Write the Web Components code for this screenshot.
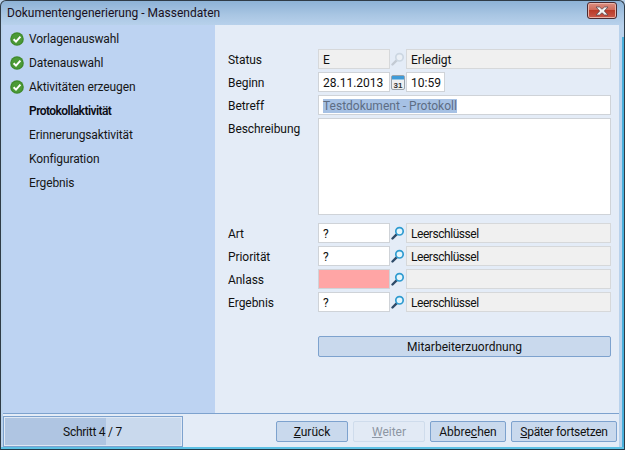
<!DOCTYPE html>
<html><head><meta charset="utf-8"><style>
html,body{margin:0;padding:0;width:625px;height:450px;overflow:hidden;background:#b9d1ea}
body{font:12px Roboto,"Open Sans",sans-serif;color:#111}
</style></head><body>
<wizard-window>
  <span slot="title">Dokumentengenerierung - Massendaten</span>
  <wizard-steps slot="side">
    <wizard-step done>Vorlagenauswahl</wizard-step>
    <wizard-step done>Datenauswahl</wizard-step>
    <wizard-step done>Aktivitäten erzeugen</wizard-step>
    <wizard-step current>Protokollaktivität</wizard-step>
    <wizard-step>Erinnerungsaktivität</wizard-step>
    <wizard-step>Konfiguration</wizard-step>
    <wizard-step>Ergebnis</wizard-step>
  </wizard-steps>
  <activity-form slot="main"></activity-form>
  <wizard-footer slot="footer"></wizard-footer>
</wizard-window>
<script>
function def(name,html){
  customElements.define(name,class extends HTMLElement{
    constructor(){super();const r=this.attachShadow({mode:'open'});r.innerHTML=typeof html==='function'?html(this):html;}
  });
}
def('wizard-window',`<style>
:host{display:flex;flex-direction:column;width:625px;height:450px;box-sizing:border-box;
 background:linear-gradient(#49afdb,#49afdb) right 0 top 36px / 2px 100% no-repeat,linear-gradient(#8db2d6 0,#a9c6e3 14px,#b9d2ec 25px,#b9d2ec 100%);
 border:1px solid #2f3b46;border-bottom:0;border-radius:6px 6px 0 0;overflow:hidden}
.title{height:24px;flex:none;display:flex;align-items:center;justify-content:space-between;padding:0 7px 0 6px;color:#1a0f20}
.body{flex:1;min-height:0;display:flex;flex-direction:column;margin:0 5px 0 2px;background:#e4ecf7}
.top{flex:1;min-height:0;display:flex}
.edge{height:3px;flex:none;box-sizing:border-box;background:#5cc0e4;border-bottom:1px solid #1f3a4a}
.side{width:212px;flex:none;background:#bdd3f2}
.main{flex:1;min-width:0}
.close{width:30px;height:17px;box-sizing:border-box;margin-top:-5px;border:1px solid #4a2a30;border-radius:3px;background:linear-gradient(#dc9083 0,#cf6a59 45%,#b93a28 50%,#c9594a 100%);display:flex;align-items:center;justify-content:center;box-shadow:inset 0 0 0 1px #e9b3a8}
</style>
<div class="title"><slot name="title"></slot><div class="close"><svg width="16" height="10" viewBox="0 0 16 10"><path d="M2 1h3.500L8 3.200 10.500 1H14l-3.700 4L14 9h-3.500L8 6.800 5.500 9H2l3.700-4z" fill="#f2f2f2" stroke="#5b4a50" stroke-width=".8"/></svg></div></div>
<div class="body"><div class="top"><div class="side"><slot name="side"></slot></div><div class="main"><slot name="main"></slot></div></div><slot name="footer"></slot></div>
<div class="edge"></div>`);
def('wizard-steps',`<style>:host{display:flex;flex-direction:column;padding-top:2px}</style><slot></slot>`);
def('wizard-step',el=>`<style>
:host{display:flex;align-items:center;height:24px;gap:5px;padding-left:7px;color:#161616;white-space:nowrap;letter-spacing:-.12px}
:host([current]){font-weight:600;letter-spacing:-.55px;color:#0c0c14}
.i{width:14px;height:14px;flex:none}
</style><span class="i">${el.hasAttribute('done')?`<svg width="14" height="14" viewBox="0 0 14 14"><circle cx="7" cy="7" r="6.800" fill="#3f8a2b"/><circle cx="7" cy="7" r="5.500" fill="#4c9a37"/><path d="M3.600 7.200 6 9.600 10.400 4.600" fill="none" stroke="#fff" stroke-width="2"/></svg>`:''}</span><span><slot></slot></span>`);
def('form-label',`<style>:host{display:block;height:20px;line-height:23px;color:#111;white-space:nowrap;letter-spacing:-.06px}</style><slot></slot>`);
def('text-field',`<style>
:host{display:block;box-sizing:border-box;height:20px;border:1px solid #cfd3d8;background:#fff;color:#111;padding:0 3px 0 4px;line-height:20px;white-space:nowrap;overflow:hidden;min-width:0}
:host([ro]){background:#f0f0f0;border-color:#d6d8da}
:host([err]){background:#ffa5a5}
:host([grey]){color:#69788c}
:host([tight]){letter-spacing:-.45px}
</style><slot></slot>`);
def('lookup-icon',el=>`<style>:host{display:flex;align-items:center;justify-content:center;height:20px}</style>
<svg width="14" height="14" viewBox="0 0 14 14" style="opacity:${el.hasAttribute('off')?.55:1}">
<path d="M1.500 12.500 5.600 8.400" stroke="${el.hasAttribute('off')?'#a9b0b8':'#2e4a68'}" stroke-width="2.400" stroke-linecap="round"/>
<circle cx="8.500" cy="5.300" r="3.700" fill="${el.hasAttribute('off')?'#f2f4f6':'#e6f6fc'}" stroke="${el.hasAttribute('off')?'#b9c6d2':'#2f9bd0'}" stroke-width="1.700"/></svg>`);
def('cal-icon',`<style>:host{display:flex;align-items:center;justify-content:center;height:20px}</style>
<svg width="14" height="16" viewBox="0 0 14 16"><rect x=".5" y="1.500" width="13" height="14" rx="1.500" fill="#eef0f2" stroke="#9aa3ab"/><rect x="1" y="2" width="12" height="3.500" fill="#3f9bd8"/><text x="7" y="13.500" font-family="Liberation Sans" font-size="8" font-weight="700" text-anchor="middle" fill="#333">31</text></svg>`);
def('wiz-button',`<style>
:host{display:flex;align-items:center;justify-content:center;box-sizing:border-box;height:21px;border:1px solid #7da2ce;border-radius:2px;background:#c9d9ed;color:#111;white-space:nowrap;cursor:default}
:host([disabled]){background:#e2eaf5;border-color:#cfdcec;color:#8d96a3}
</style><slot></slot>`);
def('activity-form',`<style>
:host{display:grid;box-sizing:border-box;height:100%;padding-top:24px;padding-left:13px;padding-right:7px;
 grid-template-columns:90px 72px 16px 205px;row-gap:3px;align-content:start}
.wide{grid-column:2 / 5}
.btn{grid-column:2 / 5}
mark{background:#a6c1e4;color:#5d6d84}
</style>
<form-label>Status</form-label><text-field ro>E</text-field><lookup-icon off></lookup-icon><text-field ro>Erledigt</text-field>
<form-label>Beginn</form-label><text-field>28.11.2013</text-field><cal-icon></cal-icon><text-field style="width:39px">10:59</text-field>
<form-label>Betreff</form-label><text-field class="wide" grey><mark>Testdokument - Protokoll</mark></text-field>
<form-label>Beschreibung</form-label><text-field class="wide" style="height:97px"></text-field>
<div style="grid-column:1/-1;height:2px"></div>
<form-label>Art</form-label><text-field>?</text-field><lookup-icon></lookup-icon><text-field ro tight>Leerschlüssel</text-field>
<form-label>Priorität</form-label><text-field>?</text-field><lookup-icon></lookup-icon><text-field ro tight>Leerschlüssel</text-field>
<form-label>Anlass</form-label><text-field err></text-field><lookup-icon></lookup-icon><text-field ro></text-field>
<form-label>Ergebnis</form-label><text-field>?</text-field><lookup-icon></lookup-icon><text-field ro tight>Leerschlüssel</text-field>
<div style="grid-column:1/-1;height:18px"></div>
<wiz-button class="btn">Mitarbeiterzuordnung</wiz-button>`);
def('step-progress',`<style>
:host{display:flex;box-sizing:border-box;width:180px;height:31px;border:1px solid #7da2ce;background:#c9d9ed;position:relative;box-shadow:inset 0 0 0 1px #dfe8f4}
.fill{width:101px;background:#afc5e2;margin:1px 0 1px 1px}
.t{position:absolute;inset:0;display:flex;align-items:center;justify-content:center;color:#111;letter-spacing:-.25px;padding-right:1px}
</style><div class="fill"></div><div class="t"><slot></slot></div>`);
def('wizard-footer',`<style>
:host{display:flex;flex:none;box-sizing:border-box;height:34px;border-top:1px solid #7da2ce;padding:2px 1px 0 0;background:#e4ecf7}
.b{display:flex;gap:5px;margin-left:auto;padding:5px 1px 0 0}
</style><step-progress>Schritt 4 / 7</step-progress>
<div class="b"><wiz-button style="width:72px"><span><u>Z</u>urück</span></wiz-button><wiz-button disabled style="width:72px"><span><u>W</u>eiter</span></wiz-button><wiz-button style="width:76px"><span>Abbre<u>c</u>hen</span></wiz-button><wiz-button style="width:106px"><span style="letter-spacing:-.3px"><u>S</u>päter fortsetzen</span></wiz-button></div>`);
</script></body></html>
